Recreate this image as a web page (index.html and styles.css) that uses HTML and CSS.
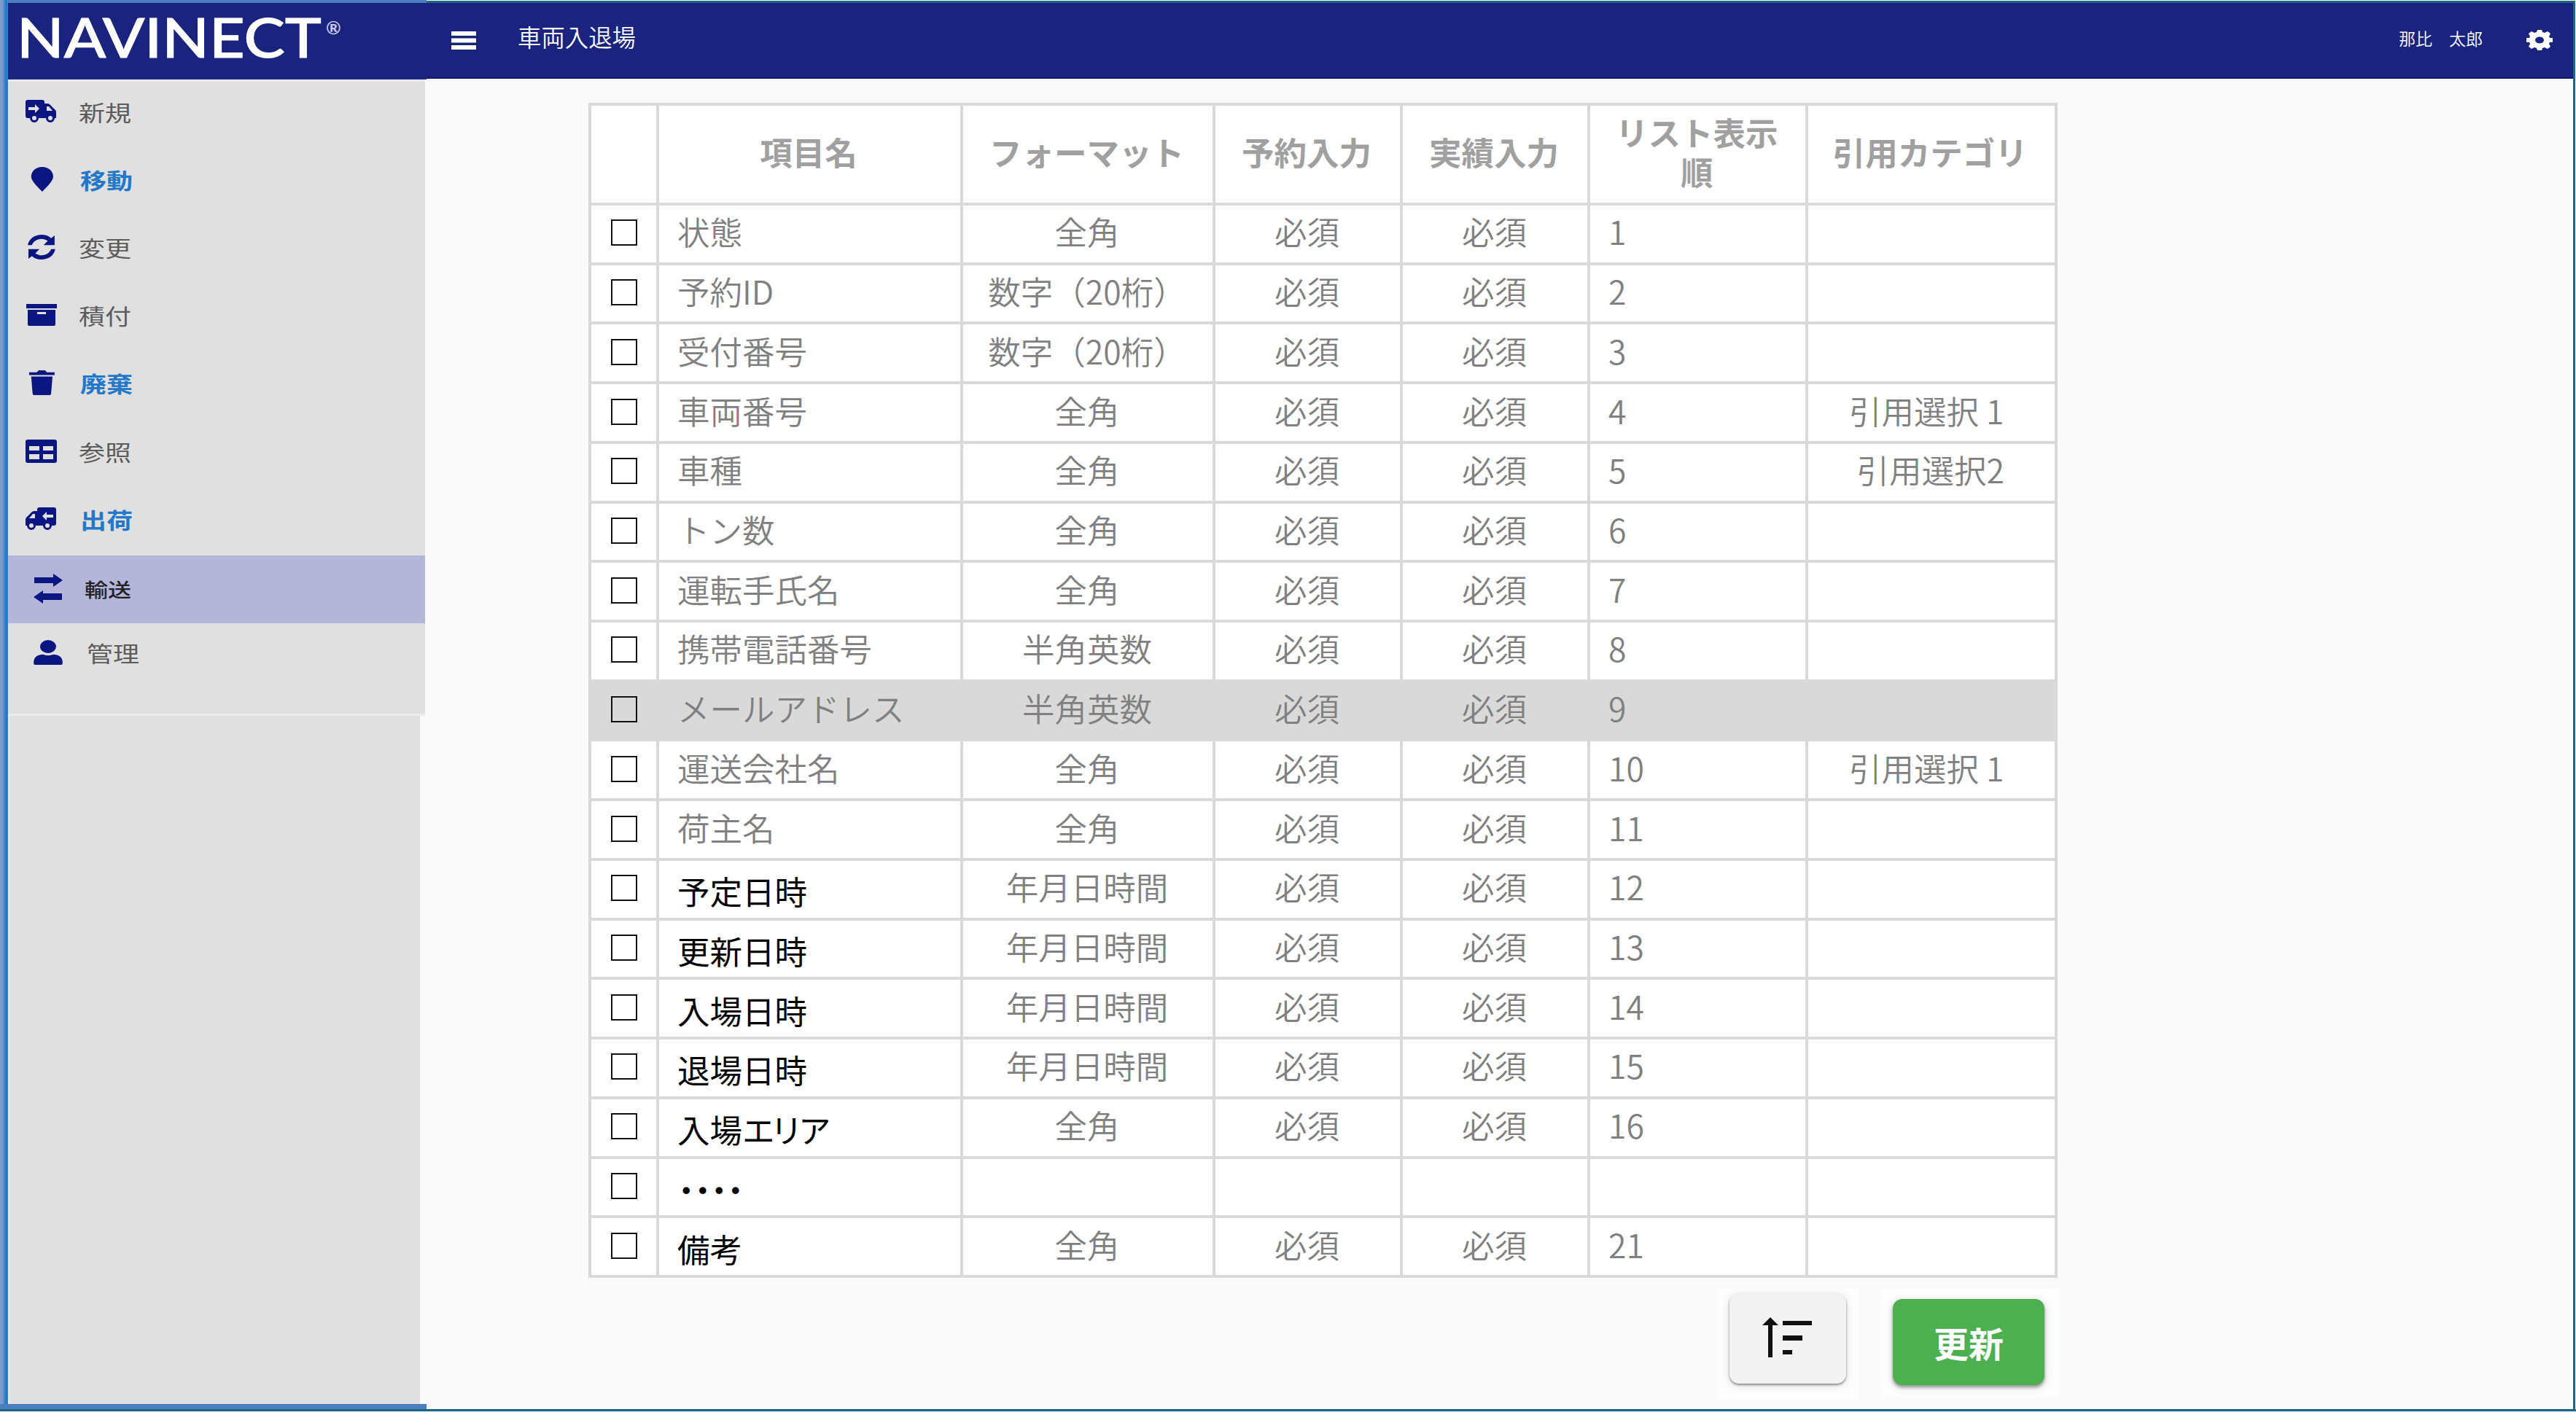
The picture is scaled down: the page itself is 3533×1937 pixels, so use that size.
FILE: index.html
```html
<!DOCTYPE html>
<html lang="ja">
<head>
<meta charset="utf-8">
<title>車両入退場</title>
<link rel="stylesheet" href="styles.css">
</head>
<body>
<div class="app">
  <aside class="side">
    <div class="logo">
      <svg width="480" height="104" viewBox="0 0 480 104"><text class="logo-name" x="12" y="75" textLength="418" lengthAdjust="spacingAndGlyphs">NAVINECT</text><text class="logo-mark" x="436" y="43">®</text></svg>
    </div>
    <nav class="menu">
      <a class="item"><svg class="icon" viewBox="0 0 44 32"><path fill-rule="evenodd" d="M4 0H24Q27 0 27 3V5H31Q34 5 36 8L42 14Q43 15 43 17V25H41A6 6 0 0 1 29 25H19A6 6 0 0 1 7 25H4Q1 25 1 22V3Q1 0 4 0ZM30 9V15H38L33 9ZM14 6V10H5V14H14V18L20 12ZM10 25A3 3 0 0 0 16 25A3 3 0 0 0 10 25ZM32 25A3 3 0 0 0 38 25A3 3 0 0 0 32 25Z"/></svg><span>新規</span></a>
      <a class="item blue"><svg class="icon" viewBox="0 0 44 36"><path d="M24 0C33 0 40 6 40 14C40 20 31 29 24 36C17 29 8 20 8 14C8 6 15 0 24 0Z"/></svg><span>移動</span></a>
      <a class="item"><svg class="icon" viewBox="0 0 44 36"><path d="M3 15C5 5 14 0 23 0C29 0 34 2 37 5L42 1V15H26L32 9C29 7 26 6 23 6C16 6 11 10 9 15ZM43 21C41 31 32 36 23 36C17 36 12 34 9 31L4 35V21H20L14 27C17 29 20 30 23 30C30 30 35 26 37 21Z"/></svg><span>変更</span></a>
      <a class="item"><svg class="icon" viewBox="0 0 44 32"><path fill-rule="evenodd" d="M2 1H44V7H2ZM4 9H42V29Q42 31 40 31H6Q4 31 4 29ZM17 12V15H29V12Z"/></svg><span>積付</span></a>
      <a class="item blue"><svg class="icon" viewBox="0 0 44 36"><path d="M5 3H16L19 0H28L31 3H42V7H5ZM8 9H39L37 33Q37 36 34 36H13Q10 36 10 33Z"/></svg><span>廃棄</span></a>
      <a class="item"><svg class="icon" viewBox="0 0 44 32"><path fill-rule="evenodd" d="M4 0H41Q44 0 44 3V29Q44 32 41 32H4Q1 32 1 29V3Q1 0 4 0ZM6 9V15H20V9ZM25 9V15H39V9ZM6 20V27H20V20ZM25 20V27H39V20Z"/></svg><span>参照</span></a>
      <a class="item blue"><svg class="icon flip" viewBox="0 0 44 32"><path fill-rule="evenodd" d="M4 0H24Q27 0 27 3V5H31Q34 5 36 8L42 14Q43 15 43 17V25H41A6 6 0 0 1 29 25H19A6 6 0 0 1 7 25H4Q1 25 1 22V3Q1 0 4 0ZM30 9V15H38L33 9ZM14 6V10H5V14H14V18L20 12ZM10 25A3 3 0 0 0 16 25A3 3 0 0 0 10 25ZM32 25A3 3 0 0 0 38 25A3 3 0 0 0 32 25Z"/></svg><span>出荷</span></a>
      <a class="item active"><svg class="icon" viewBox="0 0 44 42"><path d="M3 5H29V0L42 9L29 18V13H3ZM41 27V36H15V41L2 32L15 23V27Z"/></svg><span>輸送</span></a>
      <a class="item last"><svg class="icon" viewBox="0 0 44 36"><path d="M22 0A11 9 0 0 1 22 19A11 9 0 0 1 22 0ZM14 21Q22 24 30 21Q43 22 43 33Q43 36 40 36H4Q1 36 1 33Q1 22 14 21Z"/></svg><span>管理</span></a>
    </nav>
    <div class="side-rest"></div>
  </aside>
  <div class="page">
    <header class="bar">
      <svg class="burger" width="34" height="25" viewBox="0 0 34 25"><path d="M0 0H34V6H0ZM0 9.500H34V15.500H0ZM0 19H34V25H0Z"/></svg>
      <h1>車両入退場</h1>
      <span class="user">那比　太郎</span>
      <svg class="gear" width="36" height="28" viewBox="0 0 36 28"><path fill-rule="evenodd" d="M15 0H21L22 3L25 4L29 2L33 5L31 9L32 11H36V17H32L31 19L33 23L29 26L25 24L22 25L21 28H15L14 25L11 24L7 26L3 23L5 19L4 17H0V11H4L5 9L3 5L7 2L11 4L14 3ZM18 9.500A6 4.500 0 0 0 18 18.500A6 4.500 0 0 0 18 9.500Z"/></svg>
    </header>
    <main class="content">
      <table class="grid">
        <thead><tr><th></th><th>項目名</th><th>フォーマット</th><th>予約入力</th><th>実績入力</th><th>リスト表示順</th><th>引用カテゴリ</th></tr></thead>
        <tbody>
          <tr><td><input type="checkbox"></td><td>状態</td><td>全角</td><td>必須</td><td>必須</td><td>1</td><td></td></tr>
          <tr><td><input type="checkbox"></td><td>予約ID</td><td>数字（20桁）</td><td>必須</td><td>必須</td><td>2</td><td></td></tr>
          <tr><td><input type="checkbox"></td><td>受付番号</td><td>数字（20桁）</td><td>必須</td><td>必須</td><td>3</td><td></td></tr>
          <tr><td><input type="checkbox"></td><td>車両番号</td><td>全角</td><td>必須</td><td>必須</td><td>4</td><td class="nudge">引用選択 1</td></tr>
          <tr><td><input type="checkbox"></td><td>車種</td><td>全角</td><td>必須</td><td>必須</td><td>5</td><td>引用選択2</td></tr>
          <tr><td><input type="checkbox"></td><td>トン数</td><td>全角</td><td>必須</td><td>必須</td><td>6</td><td></td></tr>
          <tr><td><input type="checkbox"></td><td>運転手氏名</td><td>全角</td><td>必須</td><td>必須</td><td>7</td><td></td></tr>
          <tr><td><input type="checkbox"></td><td>携帯電話番号</td><td>半角英数</td><td>必須</td><td>必須</td><td>8</td><td></td></tr>
          <tr class="selected"><td><input type="checkbox"></td><td>メールアドレス</td><td>半角英数</td><td>必須</td><td>必須</td><td>9</td><td></td></tr>
          <tr><td><input type="checkbox"></td><td>運送会社名</td><td>全角</td><td>必須</td><td>必須</td><td>10</td><td class="nudge">引用選択 1</td></tr>
          <tr><td><input type="checkbox"></td><td>荷主名</td><td>全角</td><td>必須</td><td>必須</td><td>11</td><td></td></tr>
          <tr><td><input type="checkbox"></td><td class="dark">予定日時</td><td>年月日時間</td><td>必須</td><td>必須</td><td>12</td><td></td></tr>
          <tr><td><input type="checkbox"></td><td class="dark">更新日時</td><td>年月日時間</td><td>必須</td><td>必須</td><td>13</td><td></td></tr>
          <tr><td><input type="checkbox"></td><td class="dark">入場日時</td><td>年月日時間</td><td>必須</td><td>必須</td><td>14</td><td></td></tr>
          <tr><td><input type="checkbox"></td><td class="dark">退場日時</td><td>年月日時間</td><td>必須</td><td>必須</td><td>15</td><td></td></tr>
          <tr><td><input type="checkbox"></td><td class="dark">入場<span class="tight">エリア</span></td><td>全角</td><td>必須</td><td>必須</td><td>16</td><td></td></tr>
          <tr><td><input type="checkbox"></td><td class="dark"><span class="dots">・・・・</span></td><td></td><td></td><td></td><td></td><td></td></tr>
          <tr><td><input type="checkbox"></td><td class="dark">備考</td><td>全角</td><td>必須</td><td>必須</td><td>21</td><td></td></tr>
        </tbody>
      </table>
      <div class="actions">
        <div class="pad sort-pad"><button class="sort" aria-label="並べ替え"><svg width="70" height="56" viewBox="0 0 70 56"><path d="M11 0L22 11H14V55H8V11H0ZM28 5H68V11H28ZM28 25H55V32H28ZM28 45H41V51H28Z"/></svg></button></div>
        <div class="pad update-pad"><button class="update">更新</button></div>
      </div>
    </main>
  </div>
</div>
</body>
</html>
```
FILE: styles.css
```css
* { box-sizing: border-box; }
body { margin: 0; background: #fff; font-family: "Noto Sans CJK JP", sans-serif; }
.app { display: flex; width: 3533px; height: 1937px; overflow: hidden; background: linear-gradient(#fff 0 1933px, #1c6584 1933px 1936px, #d5e4ee 1936px); }

.side { width: 585px; height: 1933px; flex: none; display: flex; flex-direction: column; border-bottom: 7px solid #4a7fc1; padding-left: 11px; background: linear-gradient(90deg, #7b9ccb 0 3px, #4a85c5 6px, #1f7acb 8px 10px, #4a93d8 11px, #fafafa 11px); }
.logo { height: 109px; flex: none; border-top: 4px solid #4a7fc1; background: #1a237e; }
.logo svg { display: block; }
.logo-name { font: 500 75px Lato, sans-serif; fill: #fff; stroke: #fff; stroke-width: 1px; }
.logo-mark { font: 700 25px Lato, sans-serif; fill: #c9cbe6; }
.menu { width: 572px; height: 873px; flex: none; display: flex; flex-direction: column; background: #e0e0e0; border-top: 3px solid #ebe9e7; border-bottom: 3px solid #ebebeb; }
.item { height: 93.200px; flex: none; display: flex; align-items: center; gap: 30px; padding-left: 23px; padding-bottom: 12px; color: #5c5c5c; }
.icon { width: 44px; height: 34px; fill: #0b1680; }
.flip { transform: scaleX(-1); }
.item span { font-size: 36px; line-height: 52px; transform: scaleY(.82); }
.item.blue span { color: #2478c8; font-weight: 700; margin-left: 2px; }
.item.active { height: 93px; margin-top: -2px; padding-bottom: 2px; padding-left: 33px; gap: 28px; background: #b3b5d9; color: #222; }
.item.active span { font-size: 32px; font-weight: 500; }
.item.active .icon { height: 42px; }
.item.last { padding-left: 33px; gap: 31px; height: 80px; padding-bottom: 0; }
.side-rest { flex: 1; width: 565px; background: #e0e0e0; border-left: 3px solid #ece4de; }

.page { flex: 1; margin-top: 1px; height: 1935px; display: flex; flex-direction: column; border: 3px solid #1c6584; border-left: 0; background: #fafafa; margin-right: 1px; }
.bar { height: 104px; flex: none; display: flex; align-items: center; background: #1a237e; border-bottom: 2px solid #0e1570; padding: 0 28px 0 34px; color: #fff; }
.burger { fill: #fff; }
.gear { fill: #fff; margin-left: 60px; }
h1 { margin: 0 0 10px 57px; font-size: 32.400px; line-height: 44px; font-weight: 350; }
.user { margin-left: auto; margin-bottom: 6px; font-size: 23px; line-height: 34px; font-weight: 350; }

.content { flex: 1; padding: 33px 0 0 222px; }
.grid { width: 2015px; display: grid; grid-template-columns: 89px 413px 342px 253px 253px 294.500px 338.500px; grid-template-rows: 133px; grid-auto-rows: 77.720px; gap: 4px; padding: 4px; background: #d9d9d9; }
thead, tbody, tr { display: contents; }
th, td { display: flex; align-items: center; justify-content: center; background: #fff; padding: 0; color: #808080; font-size: 44.500px; line-height: 54px; font-weight: 350; white-space: nowrap; }
td { padding-bottom: 7px; padding-right: 2px; }
td:first-child { padding: 0 0 3px; }
th { color: #a0a0a0; font-weight: 700; text-align: center; white-space: normal; padding: 0 3px 8px 0; }
th:nth-child(6) { padding: 0 30px 8px 28px; }
td:nth-child(2), td:nth-child(6) { justify-content: flex-start; padding-left: 25px; }
.selected td { background: #d9d9d9; }
td.nudge { padding-right: 13px; }
td.dark { color: #000; font-weight: 400; padding-bottom: 0; padding-top: 5px; }
.tight { letter-spacing: -6px; }
.dots { letter-spacing: -22px; margin-left: -10px; }
input { appearance: none; width: 36px; height: 36px; margin: 0; border: 2px solid #111; background: #fff; }
.selected input { background: transparent; }

.actions { display: flex; align-items: flex-start; gap: 30px; padding: 14px 0 0 1550px; }
.pad { background: #fdfdfd; }
.sort-pad { width: 193px; height: 154px; padding: 8px 0 0 15px; }
.update-pad { width: 245px; height: 151px; padding: 15px 0 0 16px; }
button { display: flex; align-items: center; border: 0; border-radius: 13px; }
.sort { width: 160px; height: 123px; padding: 0 0 2px 45px; background: #f3f3f3; box-shadow: 0 2px 3px rgba(0,0,0,.4), 0 2px 12px rgba(0,0,0,.14); }
.sort svg { fill: #111; }
.update { width: 208px; height: 118px; justify-content: center; padding: 0; background: #4caf50; color: #fff; font: 700 48px "Noto Sans CJK JP", sans-serif; box-shadow: 0 3px 4px rgba(0,0,0,.35), 0 3px 12px rgba(0,0,0,.16); }
```
